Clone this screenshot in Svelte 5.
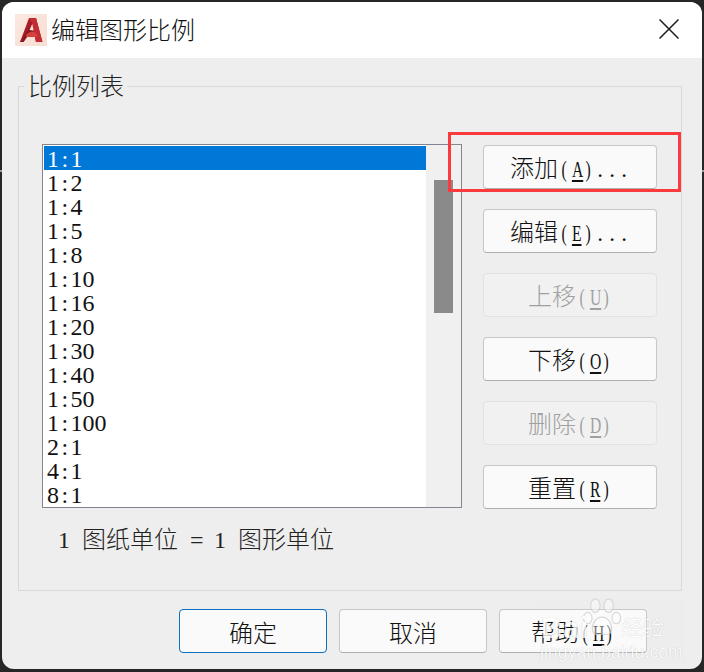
<script>
  const scales = ['1:1','1:2','1:4','1:5','1:8','1:10','1:16','1:20','1:30','1:40','1:50','1:100','2:1','4:1','8:1'];
  const actions = [
    { zh: '添加', key: 'A', tail: '...' },
    { zh: '编辑', key: 'E', tail: '...' },
    { zh: '上移', key: 'U', tail: '', off: true },
    { zh: '下移', key: 'O', tail: '' },
    { zh: '删除', key: 'D', tail: '', off: true },
    { zh: '重置', key: 'R', tail: '' }
  ];
  const footer = [
    { zh: '确定', primary: true },
    { zh: '取消' },
    { zh: '帮助', key: 'H' }
  ];
</script>

{#snippet label(a)}
  <span class="lbl"><span>{a.zh}</span>{#if a.key}<span class="cell">(</span><span class="cell u">{a.key}</span><span class="cell">)</span>{/if}{#each (a.tail || '') as d}<span class="cell dot">{d}</span>{/each}</span>
{/snippet}

<div class="screen">
  <div class="dialog">
    <header class="titlebar">
      <div class="logo">
        <svg viewBox="0 0 32 32" width="32" height="32">
          <defs>
            <linearGradient id="bg" x1="0" y1="0" x2="1" y2="1">
              <stop offset="0" stop-color="#fbe9e0"/><stop offset="1" stop-color="#f9ddd2"/>
            </linearGradient>
          </defs>
          <rect width="32" height="32" fill="url(#bg)"/>
          <path d="M5 28 L14 4 L21 4 L27.5 28 L21 28 L19.8 23 L11.5 23 L8.5 28 Z" fill="#a81e28"/>
          <path d="M14 4 L21 4 L27.5 28 L21 28 L17 9 Z" fill="#c22c32"/>
          <path d="M5 28 L15 12 L16.5 17 L8.5 28 Z" fill="#8a1a22"/>
          <path d="M11 21 C15 17 19 17 22 20 L22.6 23 L11.5 23 Z" fill="#d5413f"/>
          <path d="M14.5 16 L17.3 10 L18.6 16.4 Z" fill="#fbe4da"/>
        </svg>
      </div>
      <h1>编辑图形比例</h1>
      <svg class="close" viewBox="0 0 20 20" width="20" height="20">
        <path d="M0.5 0.5 L19.5 19.5 M19.5 0.5 L0.5 19.5" stroke="#1c1c1c" stroke-width="1.5" fill="none"/>
      </svg>
    </header>

    <main class="body">
      <section class="group">
        <div class="legend">比例列表</div>
        <div class="columns">
          <div class="leftcol">
            <div class="listbox">
              <ul>
                {#each scales as s, i}
                  {@const parts = s.split(':')}
                  <li class:sel={i === 0}><span>{parts[0]}</span><span class="colon">:</span><span>{parts[1]}</span></li>
                {/each}
              </ul>
              <div class="track"><div class="thumb"></div></div>
            </div>
            <p class="note"><span class="num">1</span><span class="wide"></span>图纸单位<span class="wide"></span><span class="num">=</span><span class="wide"></span><span class="num">1</span><span class="wide"></span>图形单位</p>
          </div>
          <div class="actions">
            {#each actions as a}
              <button class="btn" class:off={a.off} disabled={a.off}>{@render label(a)}</button>
            {/each}
          </div>
        </div>
      </section>

      <footer class="footer">
        {#each footer as f}
          <button class="btn foot" class:primary={f.primary}>{@render label(f)}</button>
        {/each}
      </footer>
    </main>

    <div class="highlight"></div>

    <div class="watermark" aria-hidden="true">
      <svg class="paw" viewBox="0 0 40 44" width="38" height="44">
        <g fill="#fff" fill-opacity=".55" stroke="#cfcfcf" stroke-width="1.2">
          <ellipse cx="13" cy="8" rx="5" ry="7"/>
          <ellipse cx="27" cy="8" rx="5" ry="7"/>
          <ellipse cx="5" cy="21" rx="4.5" ry="6"/>
          <ellipse cx="35" cy="21" rx="4.5" ry="6"/>
          <path d="M20 20 C13 20 9 28 10 34 C11 40 17 38 20 38 C23 38 29 40 30 34 C31 28 27 20 20 20 Z"/>
        </g>
      </svg>
      <span class="wm-bai">Bai</span>
      <span class="wm-jy">经验</span>
      <span class="wm-url">jingyan.baidu.com</span>
    </div>
  </div>
  <i class="edge left"></i>
  <i class="edge right"></i>
</div>

<style>
  :global(body) { margin: 0; }
  * { box-sizing: border-box; }

  .screen {
    position: relative;
    width: 704px;
    height: 672px;
    background: #262626;
    padding: 2px 2px 3px 2px;
    font-family: "Noto Sans CJK SC", "Liberation Serif", serif;
    font-weight: 300;
    color: #111;
    font-size: 24px;
    line-height: 24px;
  }
  .edge { position: absolute; top: 170px; width: 2px; height: 2px; background: #999; }
  .edge.left { left: 0; }
  .edge.right { right: 0; }
  .dialog {
    position: relative;
    width: 700px;
    height: 667px;
    background: #eeeeee;
    border-radius: 12px;
    overflow: hidden;
    display: flex;
    flex-direction: column;
  }
  .titlebar {
    height: 56px;
    flex: none;
    background: #fff;
    display: flex;
    align-items: center;
    padding: 0 23px 0 13px;
  }
  .logo { width: 32px; height: 32px; margin-right: 5px; }
  .logo svg { display: block; }
  h1 {
    margin: -1px 0 0 -1px;
    font-size: 24px;
    font-weight: 300;
    flex: 1;
    color: #111;
    line-height: 24px;
    transform: translateY(-1px);
  }
  .close { display: block; margin-top: -3px; }

  .body {
    flex: 1;
    padding: 28px 20px 0 16px;
    display: flex;
    flex-direction: column;
  }
  .group {
    position: relative;
    height: 505px;
    border: 1px solid #d9d9d9;
    padding: 57px 18px 0 23px;
  }
  .legend {
    position: absolute;
    left: 5px;
    top: -14px;
    padding: 0 3px 0 4px;
    background: linear-gradient(transparent 13px, #eeeeee 13px);
    color: #222;
  }
  .columns {
    display: flex;
    gap: 21px;
    align-items: flex-start;
  }
  .leftcol { width: 420px; }
  .listbox {
    height: 364px;
    border: 1px solid #84848e;
    background: #fff;
    display: flex;
    padding: 1px;
  }
  ul {
    list-style: none;
    margin: 0;
    padding: 0;
    width: 382px;
    flex: none;
    font-family: "Liberation Serif", serif;
    font-weight: 400;
  }
  li {
    height: 24px;
    line-height: 24px;
    padding: 1px 0 0 3px;
    color: #111;
    white-space: pre;
  }
  li.sel { background: #0078d7; color: #fff; }
  .colon { display: inline-block; width: 11.5px; text-align: center; }
  .track {
    flex: 1;
    background: #f0f0f0;
    padding: 35px 8px 0;
    margin: -1px -1px -1px 0;
  }
  .thumb { height: 133px; background: #8a8a8a; }

  .note {
    margin: 18px 0 0 16px;
    white-space: nowrap;
    color: #222;
  }
  .num { font-family: "Liberation Serif", serif; font-weight: 400; display: inline-block; width: 12px; text-align: center; }
  .wide { display: inline-block; width: 12px; }

  .actions {
    width: 174px;
    margin-top: 1px;
    display: flex;
    flex-direction: column;
    gap: 20px;
  }
  .btn {
    display: block;
    width: 174px;
    height: 44px;
    padding: 0;
    font: inherit;
    font-size: 24px;
    line-height: 24px;
    color: #111;
    text-align: center;
    white-space: nowrap;
    background: #fafafa;
    border: 1px solid #c8c8c8;
    border-bottom-color: #b0b0b0;
    border-radius: 4px;
  }
  .btn.off {
    color: #a0a0a0;
    background: #f1f1f1;
    border-color: #e2e2e2;
  }
  .btn.primary { border-color: #0b6fc2; }
  .lbl { display: inline-block; transform: translateY(1px); }
  .cell {
    display: inline-block;
    width: 12px;
    text-align: center;
    font-family: "Liberation Serif", serif;
    font-weight: 400;
    font-size: 23px;
    transform: scaleX(.68);
  }
  .cell.dot { transform: none; }
  .cell.u { text-decoration: underline; text-underline-offset: 3px; }

  .footer {
    margin-top: 18px;
    display: flex;
    gap: 12px;
    padding-left: 161px;
  }
  .foot { width: 148px; }

  .highlight {
    position: absolute;
    left: 446px;
    top: 130px;
    width: 233px;
    height: 60px;
    border: 3px solid #fb3a3d;
    pointer-events: none;
  }

  .watermark {
    position: absolute;
    left: 530px;
    top: 590px;
    width: 150px;
    height: 70px;
    color: #fff;
    font-family: "Liberation Sans", sans-serif;
    font-weight: 400;
    text-shadow: 0 0 1px rgba(0, 0, 0, .3);
    opacity: .78;
    pointer-events: none;
  }
  .paw { position: absolute; left: 51px; top: 5px; }
  .watermark span { position: absolute; white-space: nowrap; }
  .wm-bai { left: 9px; top: 21px; font-size: 29px; line-height: 30px; font-weight: 700; letter-spacing: 1px; }
  .wm-jy { left: 90px; top: 21px; font-family: "Noto Sans CJK SC", sans-serif; font-size: 21px; line-height: 26px; }
  .wm-url { left: 8px; top: 51px; font-size: 17.5px; line-height: 18px; letter-spacing: .1px; }
</style>
